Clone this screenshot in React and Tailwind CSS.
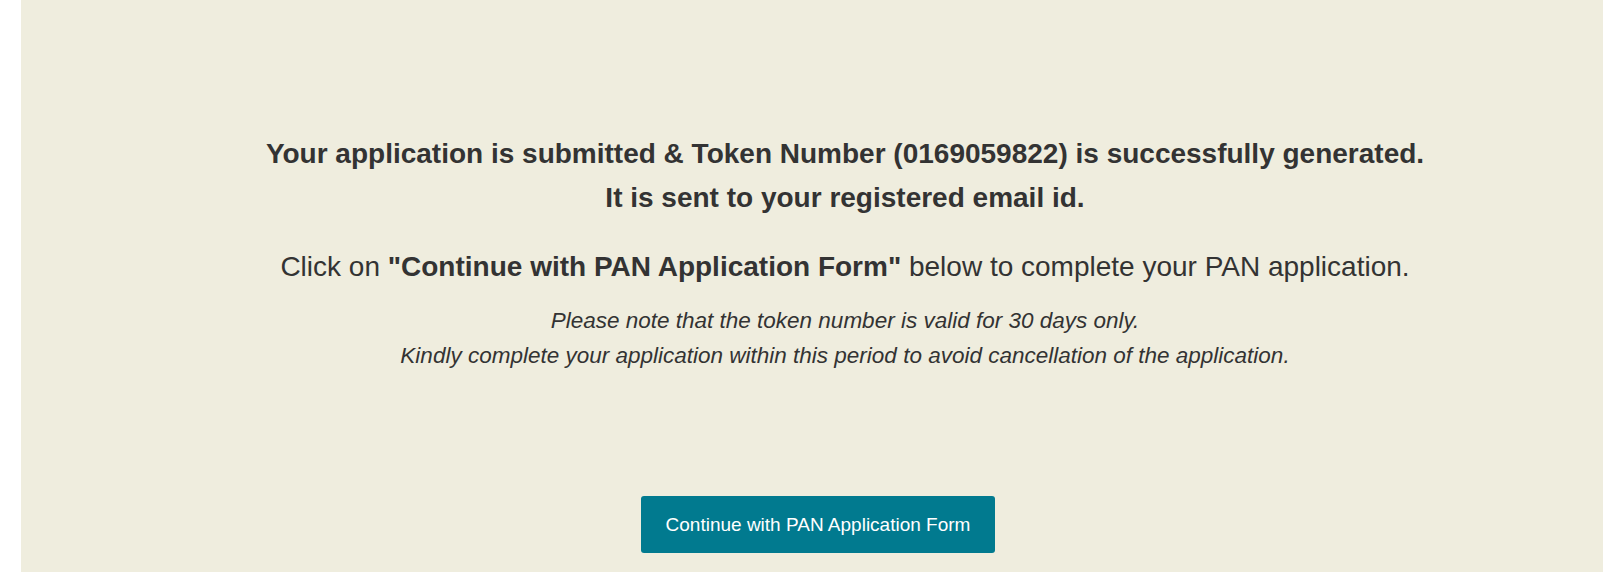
export default function App() {
  return (
    <div
      className="flex h-[572px] w-full overflow-hidden bg-white text-[#333]"
      style={{ fontFamily: '"Liberation Sans", Arial, sans-serif' }}
    >
      <div className="w-[21px] shrink-0 bg-white" />
      <div className="flex flex-1 flex-col bg-[#efedde]">
        <div className="flex flex-col items-center pl-[66px] pt-[132px] text-center">
          <p className="text-[28px] font-bold leading-[44px]">
            Your application is submitted &amp; Token Number (0169059822) is successfully generated.
            <br />
            It is sent to your registered email id.
          </p>
          <p className="mt-[25px] text-[28px] leading-[44px]">
            Click on <b>"Continue with PAN Application Form"</b> below to complete your PAN application.
          </p>
          <p className="mt-[14px] text-[22.5px] italic leading-[35px]">
            Please note that the token number is valid for 30 days only.
            <br />
            Kindly complete your application within this period to avoid cancellation of the application.
          </p>
        </div>
        <div className="flex justify-center pl-[12px] pt-[123px]">
          <button className="h-[57px] w-[354px] rounded-[3px] bg-[#017a8f] pt-[2px] text-[19px] text-white">
            Continue with PAN Application Form
          </button>
        </div>
      </div>
    </div>
  );
}
